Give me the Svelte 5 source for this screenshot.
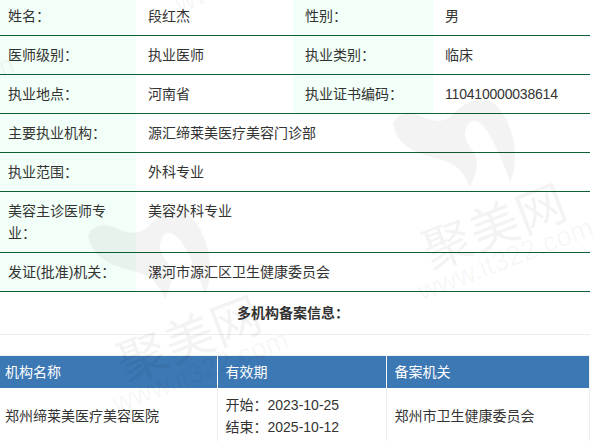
<script>
  const rows = [
    [["姓名：", "段红杰"], ["性别：", "男"]],
    [["医师级别：", "执业医师"], ["执业类别：", "临床"]],
    [["执业地点：", "河南省"], ["执业证书编码：", "110410000038614"]],
    [["主要执业机构：", "源汇缔莱美医疗美容门诊部"]],
    [["执业范围：", "外科专业"]],
    [["美容主诊医师专业：", "美容外科专业"]],
    [["发证(批准)机关：", "漯河市源汇区卫生健康委员会"]]
  ];

  // watermark tiles, repeated over the page
  const marks = [
    [0, 0],
    [-305, 112],
    [-243, -288],
    [-579, -163]
  ];
</script>

<div class="page">
  <div class="sheet">
    <table class="info">
      <colgroup>
        <col style="width: 140px" />
        <col style="width: 157px" />
        <col style="width: 140px" />
        <col style="width: 157px" />
      </colgroup>
      <tbody>
        {#each rows as row}
          <tr>
            {#each row as [label, value]}
              <th>{label}</th>
              <td colspan={row.length === 1 ? 3 : 1} class:code={/^\d+$/.test(value)}>{value}</td>
            {/each}
          </tr>
        {/each}
      </tbody>
    </table>

    <h3 class="heading">多机构备案信息：</h3>

    <table class="records">
      <colgroup>
        <col style="width: 217px" />
        <col style="width: 169px" />
        <col />
      </colgroup>
      <thead>
        <tr>
          <th>机构名称</th>
          <th>有效期</th>
          <th>备案机关</th>
        </tr>
      </thead>
      <tbody>
        <tr>
          <td>郑州缔莱美医疗美容医院</td>
          <td>
            <div>开始：2023-10-25</div>
            <div>结束：2025-10-12</div>
          </td>
          <td>郑州市卫生健康委员会</td>
        </tr>
      </tbody>
    </table>
  </div>

  <svg class="watermark" width="600" height="441" viewBox="0 0 600 441" aria-hidden="true">
    {#each marks as [dx, dy]}
      <g transform="translate({dx} {dy})">
        <path
          d="M393 124C396 114 408 111 418 115C428 119 436 122 444 120C452 118 458 106 470 102C480 98 492 98 500 110C510 122 515 140 515 157C515 168 513 176 510 182C506 170 502 160 497 150C493 140 487 128 478 122C471 118 466 124 465 134C465 144 475 150 477 160C478 170 473 180 470 187C466 178 462 171 455 166C446 160 434 158 424 155C410 150 396 142 393 124Z"
        />
        <text class="brand" transform="translate(431 270) rotate(-21)">聚美网</text>
        <text class="site" transform="translate(422 301) rotate(-21)">www.it322.com</text>
      </g>
    {/each}
  </svg>
</div>

<style>
  :global(body) {
    overflow: hidden;
    background: #fff;
  }

  .page {
    position: relative;
    width: 600px;
    height: 441px;
    overflow: hidden;
    color: #333;
    font-family: "Liberation Sans", "Noto Sans CJK SC", sans-serif;
    font-size: 14px;
    line-height: 22px;
  }

  .sheet {
    width: 594px;
    margin: -3px 0 0 -4px;
  }

  table {
    border-collapse: collapse;
    table-layout: fixed;
  }

  .info {
    width: 594px;
  }

  .info th,
  .info td {
    padding: 8px 12px;
    border-bottom: 1px solid #0f5f36;
    text-align: left;
    font-weight: 400;
    vertical-align: top;
  }

  .info th {
    background: #f2fff8;
  }

  .info .code {
    letter-spacing: -0.2px;
  }

  .heading {
    margin: 0;
    padding: 10px 0;
    border-bottom: 1px solid #eee;
    font-size: 14px;
    line-height: 22px;
    font-weight: 700;
    text-align: center;
  }

  .records {
    width: 590px;
    margin: 20px 0 0 4px;
    border: 1px solid #eee;
    border-left: 0;
  }

  .records th {
    height: 32px;
    padding: 0 8px;
    border-left: 1px solid #fff;
    background: #3c78b4;
    color: #fff;
    font-weight: 400;
    text-align: left;
  }

  .records th:first-child,
  .records td:first-child {
    padding-left: 5px;
    border-left: 0;
  }

  .records td {
    padding: 6px 8px;
    border-left: 1px solid #eee;
  }

  .watermark {
    position: absolute;
    top: 0;
    left: 0;
    pointer-events: none;
  }

  .watermark path,
  .watermark text {
    fill: rgba(0, 0, 0, 0.048);
  }

  .brand {
    font-family: "Noto Sans CJK SC", sans-serif;
    font-size: 49px;
    letter-spacing: 1px;
  }

  .site {
    font-family: "Liberation Sans", sans-serif;
    font-size: 27.6px;
  }
</style>
